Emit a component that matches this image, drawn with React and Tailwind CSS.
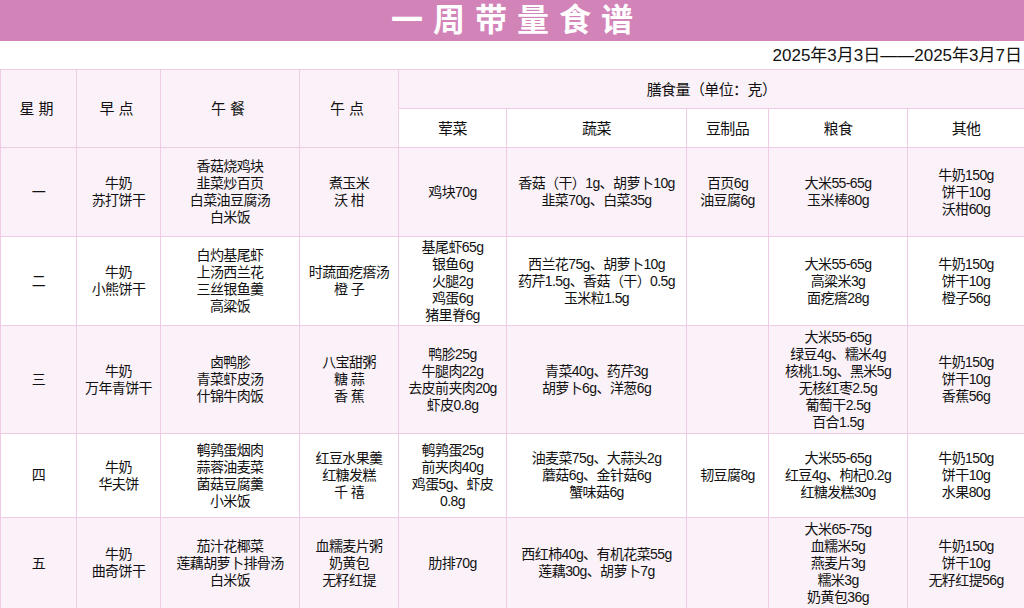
const cols=[76,84,139,99,108,180,82,139,117];
const rows=[
{d:"一",b:["牛奶","苏打饼干"],l:["香菇烧鸡块","韭菜炒百页","白菜油豆腐汤","白米饭"],s:["煮玉米","沃 柑"],m:["鸡块70g"],v:["香菇（干）1g、胡萝卜10g","韭菜70g、白菜35g"],t:["百页6g","油豆腐6g"],g:["大米55-65g","玉米棒80g"],o:["牛奶150g","饼干10g","沃柑60g"],h:89,pink:true},
{d:"二",b:["牛奶","小熊饼干"],l:["白灼基尾虾","上汤西兰花","三丝银鱼羹","高粱饭"],s:["时蔬面疙瘩汤","橙 子"],m:["基尾虾65g","银鱼6g","火腿2g","鸡蛋6g","猪里脊6g"],v:["西兰花75g、胡萝卜10g","药芹1.5g、香菇（干）0.5g","玉米粒1.5g"],t:[],g:["大米55-65g","高粱米3g","面疙瘩28g"],o:["牛奶150g","饼干10g","橙子56g"],h:89},
{d:"三",b:["牛奶","万年青饼干"],l:["卤鸭胗","青菜虾皮汤","什锦牛肉饭"],s:["八宝甜粥","糖 蒜","香 蕉"],m:["鸭胗25g","牛腿肉22g","去皮前夹肉20g","虾皮0.8g"],v:["青菜40g、药芹3g","胡萝卜6g、洋葱6g"],t:[],g:["大米55-65g","绿豆4g、糯米4g","核桃1.5g、黑米5g","无核红枣2.5g","葡萄干2.5g","百合1.5g"],o:["牛奶150g","饼干10g","香蕉56g"],h:108,pink:true},
{d:"四",b:["牛奶","华夫饼"],l:["鹌鹑蛋烟肉","蒜蓉油麦菜","菌菇豆腐羹","小米饭"],s:["红豆水果羹","红糖发糕","千 禧"],m:["鹌鹑蛋25g","前夹肉40g","鸡蛋5g、虾皮","0.8g"],v:["油麦菜75g、大蒜头2g","蘑菇6g、金针菇6g","蟹味菇6g"],t:["韧豆腐8g"],g:["大米55-65g","红豆4g、枸杞0.2g","红糖发糕30g"],o:["牛奶150g","饼干10g","水果80g"],h:84},
{d:"五",b:["牛奶","曲奇饼干"],l:["茄汁花椰菜","莲藕胡萝卜排骨汤","白米饭"],s:["血糯麦片粥","奶黄包","无籽红提"],m:["肋排70g"],v:["西红柿40g、有机花菜55g","莲藕30g、胡萝卜7g"],t:[],g:["大米65-75g","血糯米5g","燕麦片3g","糯米3g","奶黄包36g"],o:["牛奶150g","饼干10g","无籽红提56g"],h:91,pink:true},
];
const bd="border border-[#efcbe4]";
function Cell({lines,extra=""}){return <td className={`${bd} text-center align-middle p-0 ${extra}`}>{lines.map((x,i)=><div key={i} className="whitespace-nowrap">{x}</div>)}</td>}
export default function App(){
return <div className="w-[1024px] h-[608px] overflow-hidden bg-white text-[#111] text-[14px] leading-[17px] tracking-[-0.6px]" style={{fontFamily:'"Liberation Sans","Noto Sans CJK SC",sans-serif'}}>
<div className="h-[41px] bg-[#d283b8] flex items-center justify-center text-white text-[32px] font-bold tracking-[10px] pl-[10px]">一周带量食谱</div>
<div className="h-[28px] flex items-center justify-end pr-[2px] text-[17px] tracking-normal">2025年3月3日——2025年3月7日</div>
<table className="border-collapse table-fixed w-[1022px]">
<colgroup>{cols.map((w,i)=><col key={i} style={{width:w}}/>)}</colgroup>
<tbody>
<tr className="h-[39px] bg-[#faf2f8]">
{["星期","早点","午餐","午点"].map(x=><td key={x} rowSpan={2} className={`${bd} text-center text-[15px] tracking-[4px] p-0`}>{x}</td>)}
<td colSpan={5} className={`${bd} text-center text-[15px] p-0`}>膳食量（单位：克）</td>
</tr>
<tr className="h-[39px] bg-white">
{["荤菜","蔬菜","豆制品","粮食","其他"].map(x=><td key={x} className={`${bd} text-center text-[15px] p-0`}>{x}</td>)}
</tr>
{rows.map(r=><tr key={r.d} style={{height:r.h}} className={r.pink?"bg-[#faf2f8]":"bg-white"}>
<Cell lines={[r.d]}/><Cell lines={r.b}/><Cell lines={r.l}/><Cell lines={r.s}/><Cell lines={r.m}/><Cell lines={r.v}/><Cell lines={r.t}/><Cell lines={r.g}/><Cell lines={r.o}/>
</tr>)}
</tbody></table></div>}
